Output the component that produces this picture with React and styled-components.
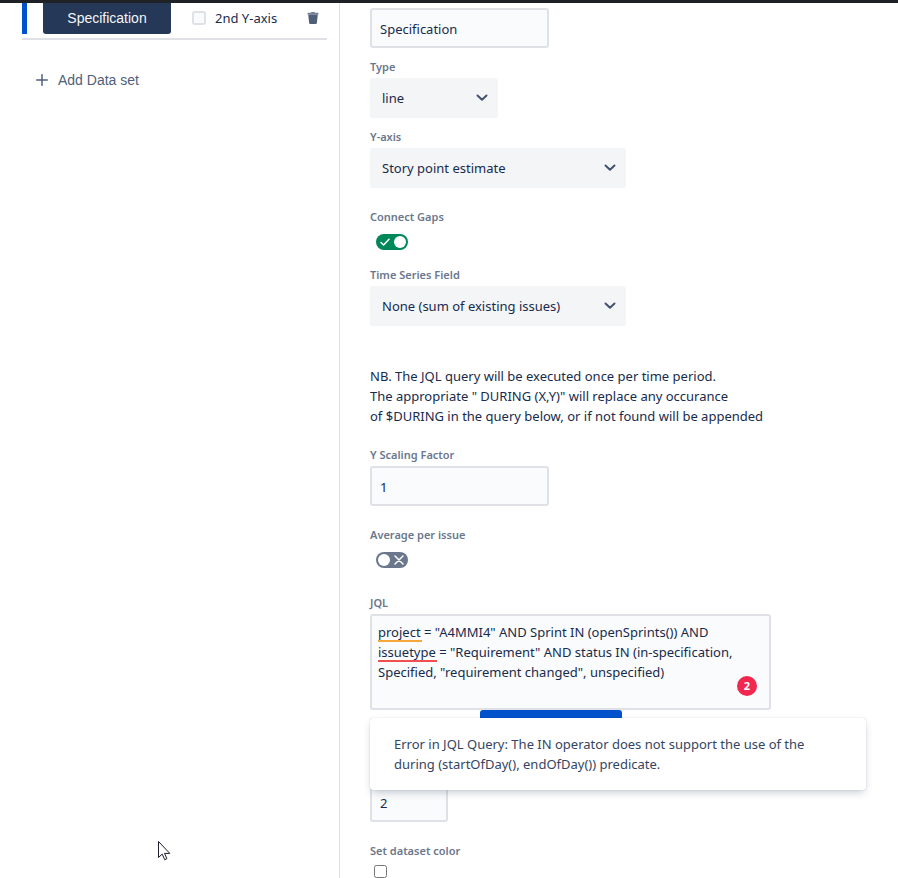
import React, { useState } from 'react';
import styled, { createGlobalStyle } from 'styled-components';

const GlobalStyle = createGlobalStyle`
* {
    box-sizing: border-box;
}
body {
    margin: 0;
    background-color: #ffffff;
    color: #172b4d;
    font-family: "Noto Sans", "Open Sans", sans-serif;
    font-size: 13px;
    line-height: 20px;
}
`;

const Page = styled.div`
border-top: 3px solid #1e2126;
display: flex;
min-height: 100vh;
`;

const Sidebar = styled.aside`
width: 340px;
flex-shrink: 0;
padding: 0 12px 0 22px;
border-right: 1px solid #dfe1e6;
`;

const DataSetRow = styled.div`
display: flex;
align-items: flex-start;
padding-bottom: 4px;
border-bottom: 2px solid #dfe1e6;
`;

const ActiveMark = styled.span`
width: 5px;
height: 31px;
margin-right: 16px;
background-color: #0052cc;
`;

const DataSetButton = styled.button`
width: 128px;
height: 31px;
padding: 0 0 2px;
border: none;
border-radius: 0 0 3px 3px;
background-color: #253858;
color: #f4f5f7;
font-family: "Liberation Sans", Arial, sans-serif;
font-size: 14px;
cursor: pointer;
`;

const AxisLabel = styled.label`
display: flex;
align-items: center;
gap: 9px;
height: 30px;
margin-left: 21px;
`;

const AxisCheckbox = styled.input`
appearance: none;
width: 14px;
height: 14px;
margin: 0;
border: 2px solid #dfe1e6;
border-radius: 3px;
background-color: #fafbfc;
`;

const IconButton = styled.button`
display: flex;
align-items: center;
height: 30px;
margin-left: auto;
padding: 0 8px;
border: none;
background: none;
color: #505f79;
cursor: pointer;
`;

const AddButton = styled.button`
display: flex;
align-items: center;
gap: 10px;
margin-top: 30px;
padding: 0 14px;
border: none;
background: none;
color: #505f79;
font-family: "Liberation Sans", Arial, sans-serif;
font-size: 14px;
line-height: 20px;
cursor: pointer;
`;

const Form = styled.form`
flex: 1;
min-width: 0;
padding: 5px 30px 0;
`;

const Field = styled.div`
padding-top: ${(props) => props.$gap || 0}px;
`;

const Label = styled.label`
display: block;
color: #6b778c;
font-size: 11px;
font-weight: 600;
line-height: 18px;
padding-bottom: 2px;
`;

const TextInput = styled.input`
display: block;
width: ${(props) => (props.$short ? 78 : 179)}px;
height: 40px;
padding: 2px 8px 0;
border: 2px solid #dfe1e6;
border-radius: 3px;
background-color: #fafbfc;
color: #172b4d;
font: inherit;
`;

const SelectBox = styled.div`
position: relative;
width: ${(props) => (props.$short ? 128 : 256)}px;
color: #42526e;
svg {
    position: absolute;
    top: 16px;
    right: 9px;
    pointer-events: none;
}
`;

const Select = styled.select`
appearance: none;
display: block;
width: 100%;
height: 40px;
padding: 0 32px 0 12px;
border: none;
border-radius: 3px;
background-color: #f4f5f7;
color: #172b4d;
font: inherit;
`;

const Track = styled.span`
position: relative;
display: flex;
flex-direction: ${(props) => (props.$on ? 'row' : 'row-reverse')};
align-items: center;
justify-content: space-between;
width: 32px;
height: 16px;
margin: 6px 6px 0;
padding: ${(props) => (props.$on ? '0 2px 0 4px' : '0 4px 0 2px')};
border-radius: 8px;
background-color: ${(props) => (props.$on ? '#00875a' : '#6b778c')};
input {
    position: absolute;
    inset: 0;
    width: 100%;
    height: 100%;
    margin: 0;
    opacity: 0;
    cursor: pointer;
}
`;

const Knob = styled.span`
width: 12px;
height: 12px;
border-radius: 50%;
background-color: #ffffff;
`;

const Note = styled.p`
margin: 0;
padding-top: 40px;
`;

const QueryBox = styled.div`
position: relative;
max-width: 401px;
`;

const QueryInput = styled.textarea`
display: block;
width: 100%;
height: 96px;
padding: 6px 24px 6px 6px;
border: 2px solid #dfe1e6;
border-radius: 3px;
background-color: #fafbfc;
color: #172b4d;
font: inherit;
resize: none;
overflow: hidden;
`;

const Underline = styled.span`
position: absolute;
top: ${(props) => props.$line * 20 + 6}px;
left: 8px;
width: ${(props) => props.$width}px;
height: 2px;
background-color: ${(props) => props.$color};
`;

const IssueCount = styled.span`
position: absolute;
right: 14px;
bottom: 14px;
width: 20px;
height: 20px;
border-radius: 50%;
background-color: #f1274f;
color: #ffffff;
font-size: 11px;
font-weight: 700;
text-align: center;
`;

const QueryError = styled.div`
position: absolute;
top: 104px;
left: 0;
width: 496px;
padding: 16px 48px 16px 24px;
border-radius: 3px;
background-color: #ffffff;
box-shadow: 0 4px 8px -2px rgba(9, 30, 66, 0.25), 0 0 1px rgba(9, 30, 66, 0.31);
color: #344563;
z-index: 1;
`;

const CheckButton = styled.button`
display: block;
width: 142px;
height: 32px;
margin-left: 110px;
border: none;
border-radius: 3px;
background-color: #0052cc;
cursor: pointer;
`;

const ColorCheckbox = styled.input`
display: block;
width: 13px;
height: 13px;
margin: 3px 4px 0;
`;

const Pointer = styled.svg`
position: absolute;
top: 841px;
left: 158px;
`;

const Chevron = () => (
    <svg width="14" height="8" viewBox="0 0 14 8" fill="none" stroke="currentColor" strokeWidth="2" strokeLinecap="round" strokeLinejoin="round">
        <path d="M2.5 1.5 7 5.7 11.5 1.5" />
    </svg>
);

const TrashIcon = () => (
    <svg width="12" height="12" viewBox="0 0 12 12" fill="currentColor">
        <path d="M.5 2.500V1.200Q.5.8 1 .8h3L4.500 0h3L8 .8h3q.5 0 .5.4v1.300z" opacity=".8" />
        <path d="M1.200 2.500h9.600l-.9 8.300Q9.800 12 8.700 12H3.300Q2.200 12 2.100 10.800z" />
    </svg>
);

const PlusIcon = () => (
    <svg width="12" height="12" viewBox="0 0 12 12" stroke="currentColor" strokeWidth="1.500" strokeLinecap="round">
        <path d="M6 .7v10.600M.7 6h10.600" />
    </svg>
);

const CheckIcon = () => (
    <svg width="10" height="8" viewBox="0 0 10 8" fill="none" stroke="#ffffff" strokeWidth="1.500" strokeLinecap="round" strokeLinejoin="round">
        <path d="M1 4.500 3.600 7 9 1.300" />
    </svg>
);

const CrossIcon = () => (
    <svg width="10" height="10" viewBox="0 0 10 10" stroke="#ffffff" strokeWidth="1.500" strokeLinecap="round">
        <path d="M1 1l8 8M9 1l-8 8" />
    </svg>
);

function Toggle({ id, defaultOn }) {
    const [on, setOn] = useState(defaultOn);

    return (
        <Track $on={on}>
            <input id={id} type="checkbox" role="switch" checked={on} onChange={() => setOn(!on)} />
            {on ? <CheckIcon /> : <CrossIcon />}
            <Knob />
        </Track>
    );
}

function Dropdown({ id, options, short }) {
    return (
        <SelectBox $short={short}>
            <Select id={id}>
                {options.map((option) => (
                    <option key={option}>{option}</option>
                ))}
            </Select>
            <Chevron />
        </SelectBox>
    );
}

const query = 'project = "A4MMI4" AND Sprint IN (openSprints()) AND issuetype = "Requirement" AND status IN (in-specification, Specified, "requirement changed", unspecified)';

function App() {
    return (
        <>
            <GlobalStyle />
            <Page>
                <Sidebar>
                    <DataSetRow>
                        <ActiveMark />
                        <DataSetButton type="button">Specification</DataSetButton>
                        <AxisLabel>
                            <AxisCheckbox type="checkbox" />
                            2nd Y-axis
                        </AxisLabel>
                        <IconButton type="button" aria-label="Delete data set">
                            <TrashIcon />
                        </IconButton>
                    </DataSetRow>
                    <AddButton type="button">
                        <PlusIcon />
                        Add Data set
                    </AddButton>
                </Sidebar>
                <Form>
                    <TextInput type="text" aria-label="Name" defaultValue="Specification" />
                    <Field $gap={10}>
                        <Label htmlFor="type">Type</Label>
                        <Dropdown id="type" options={['line']} short />
                    </Field>
                    <Field $gap={10}>
                        <Label htmlFor="yaxis">Y-axis</Label>
                        <Dropdown id="yaxis" options={['Story point estimate']} />
                    </Field>
                    <Field $gap={20}>
                        <Label htmlFor="gaps">Connect Gaps</Label>
                        <Toggle id="gaps" defaultOn={true} />
                    </Field>
                    <Field $gap={16}>
                        <Label htmlFor="series">Time Series Field</Label>
                        <Dropdown id="series" options={['None (sum of existing issues)']} />
                    </Field>
                    <Note>
                        NB. The JQL query will be executed once per time period.<br />
                        The appropriate " DURING (X,Y)" will replace any occurance<br />
                        of $DURING in the query below, or if not found will be appended
                    </Note>
                    <Field $gap={20}>
                        <Label htmlFor="scaling">Y Scaling Factor</Label>
                        <TextInput id="scaling" type="text" defaultValue="1" />
                    </Field>
                    <Field $gap={20}>
                        <Label htmlFor="average">Average per issue</Label>
                        <Toggle id="average" defaultOn={false} />
                    </Field>
                    <Field $gap={26}>
                        <Label htmlFor="jql">JQL</Label>
                        <QueryBox>
                            <QueryInput id="jql" spellCheck={false} defaultValue={query} />
                            <Underline $line={1} $width={44} $color="#f5a93b" />
                            <Underline $line={2} $width={59} $color="#f0504f" />
                            <IssueCount>2</IssueCount>
                            <QueryError role="alert">
                                Error in JQL Query: The IN operator does not support the use of the during (startOfDay(), endOfDay()) predicate.
                            </QueryError>
                        </QueryBox>
                        <CheckButton type="button" aria-label="Check query" />
                    </Field>
                    <Field $gap={40}>
                        <TextInput type="text" aria-label="Line width" defaultValue="2" $short />
                    </Field>
                    <Field $gap={20}>
                        <Label htmlFor="color">Set dataset color</Label>
                        <ColorCheckbox id="color" type="checkbox" />
                    </Field>
                </Form>
            </Page>
            <Pointer width="13" height="20" viewBox="0 0 13 20" fill="#ffffff" stroke="#1b1b2b" strokeWidth="1">
                <path d="M.5.5v16l3.700-3.400 2.500 5.600 2.200-1-2.400-5.300h5.300z" />
            </Pointer>
        </>
    );
}

export default App;
